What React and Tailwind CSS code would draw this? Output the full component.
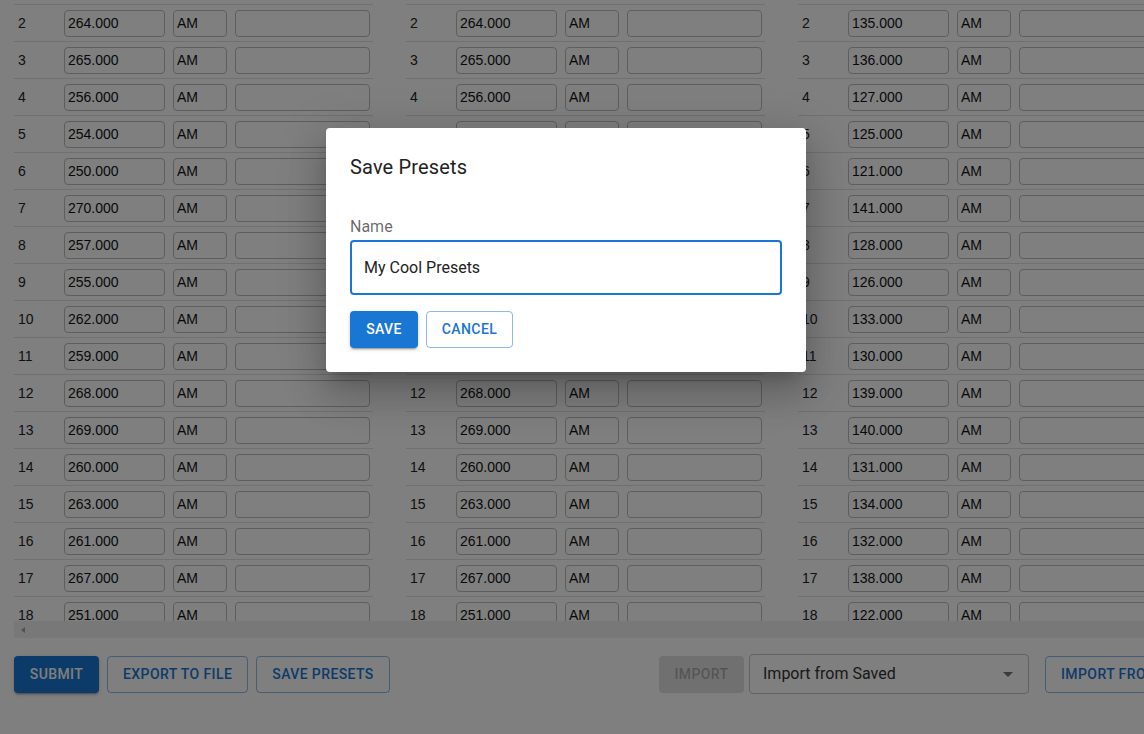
import React from 'react';

const COL_A = [264, 265, 256, 254, 250, 270, 257, 255, 262, 259, 268, 269, 260, 263, 261, 267, 251];
const COL_C = [135, 136, 127, 125, 121, 141, 128, 126, 133, 130, 139, 140, 131, 134, 132, 138, 122];

const COLUMNS = [COL_A, COL_A, COL_C];

function Block({ values }) {
  return (
    <div className="w-[359px] shrink-0 mr-[33px]">
      {values.map((v, i) => (
        <div key={i} className="h-[37px] border-t border-[#e0e0e0] flex items-center">
          <div className="w-[50px] pl-[4px] text-[14px] text-[#222]">{i + 2}</div>
          <input
            readOnly
            value={v.toFixed(3)}
            className="w-[101px] h-[27px] border border-[#bdbdbd] rounded-[4px] px-[3px] text-[14px] text-[#111] bg-white outline-none"
          />
          <input
            readOnly
            value="AM"
            className="w-[54px] h-[27px] ml-[8px] border border-[#bdbdbd] rounded-[4px] px-[3px] text-[14px] text-[#111] bg-white outline-none"
          />
          <input
            readOnly
            value=""
            className="w-[135px] h-[27px] ml-[8px] border border-[#bdbdbd] rounded-[4px] px-[3px] text-[14px] bg-white outline-none shrink-0"
          />
        </div>
      ))}
    </div>
  );
}

function OutlinedBtn({ children, className = "" }) {
  return (
    <button className={"shrink-0 h-[37px] px-[15px] border border-[#1976d2]/50 rounded-[4px] text-[#1976d2] text-[14px] font-medium tracking-[0.4px] uppercase " + className}>
      {children}
    </button>
  );
}

export default function App() {
  return (
    <div className="relative w-[1144px] h-[734px] overflow-hidden bg-white" style={{ fontFamily: '"Liberation Sans", Arial, sans-serif' }}>
      {/* table area */}
      <div className="h-[621px] overflow-hidden pl-[14px] pt-[4px]">
        <div className="flex w-max">
          {COLUMNS.map((c, i) => <Block key={i} values={c} />)}
        </div>
      </div>

      {/* horizontal scrollbar */}
      <div className="ml-[14px] h-[17px] bg-[#f1f1f1] flex items-center pl-[5px]">
        <svg width="8" height="8" viewBox="0 0 8 8"><path d="M6 1 L2 4 L6 7 Z" fill="#a3a3a3" /></svg>
      </div>

      {/* action bar */}
      <div className="flex items-center pl-[14px] mt-[16px] whitespace-nowrap w-max" style={{ fontFamily: 'Roboto, "Liberation Sans", sans-serif' }}>
        <button className="shrink-0 h-[37px] w-[85px] bg-[#1976d2] text-white rounded-[4px] text-[14px] font-medium tracking-[0.4px] shadow-[0_3px_1px_-2px_rgba(0,0,0,0.2),0_2px_2px_0_rgba(0,0,0,0.14),0_1px_5px_0_rgba(0,0,0,0.12)]">
          SUBMIT
        </button>
        <OutlinedBtn className="ml-[8px] w-[141px]">Export to File</OutlinedBtn>
        <OutlinedBtn className="ml-[8px] w-[134px]">Save Presets</OutlinedBtn>
        <button className="shrink-0 ml-[269px] h-[37px] w-[85px] bg-black/[0.12] text-black/[0.26] rounded-[4px] text-[14px] font-medium tracking-[0.4px]">
          IMPORT
        </button>
        <div className="shrink-0 ml-[5px] w-[280px] h-[40px] border border-[#c4c4c4] rounded-[4px] flex items-center justify-between pl-[13px] pr-[8px] text-[16px] text-[#333]">
          <span>Import from Saved</span>
          <svg width="24" height="24" viewBox="0 0 24 24"><path d="M7 10l5 5 5-5z" fill="#757575" /></svg>
        </div>
        <OutlinedBtn className="ml-[16px]">Import from File</OutlinedBtn>
      </div>

      {/* backdrop + dialog */}
      <div className="absolute inset-0 bg-black/50">
        <div
          className="absolute left-[326px] top-[128px] w-[480px] h-[244px] bg-white rounded-[4px] shadow-[0_11px_15px_-7px_rgba(0,0,0,0.2),0_24px_38px_3px_rgba(0,0,0,0.14),0_9px_46px_8px_rgba(0,0,0,0.12)] px-[24px] pt-[23px]"
          style={{ fontFamily: 'Roboto, "Liberation Sans", sans-serif' }}
        >
          <h2 className="text-[20px] leading-[32px] text-[#222] tracking-[0.15px]">Save Presets</h2>
          <div className="mt-[32px] text-[16px] leading-[24px] text-black/60">Name</div>
          <div className="mt-[1px] h-[55px] border-2 border-[#1976d2] rounded-[4px] flex items-center px-[12px] text-[16px] text-[#222]">
            My Cool Presets
          </div>
          <div className="flex mt-[16px]">
            <button className="h-[37px] w-[68px] bg-[#1976d2] text-white rounded-[4px] text-[14px] font-medium tracking-[0.4px] shadow-[0_3px_1px_-2px_rgba(0,0,0,0.2),0_2px_2px_0_rgba(0,0,0,0.14),0_1px_5px_0_rgba(0,0,0,0.12)]">
              SAVE
            </button>
            <button className="ml-[8px] h-[37px] w-[87px] border border-[#1976d2]/50 text-[#1976d2] rounded-[4px] text-[14px] font-medium tracking-[0.4px]">
              CANCEL
            </button>
          </div>
        </div>
      </div>
    </div>
  );
}
